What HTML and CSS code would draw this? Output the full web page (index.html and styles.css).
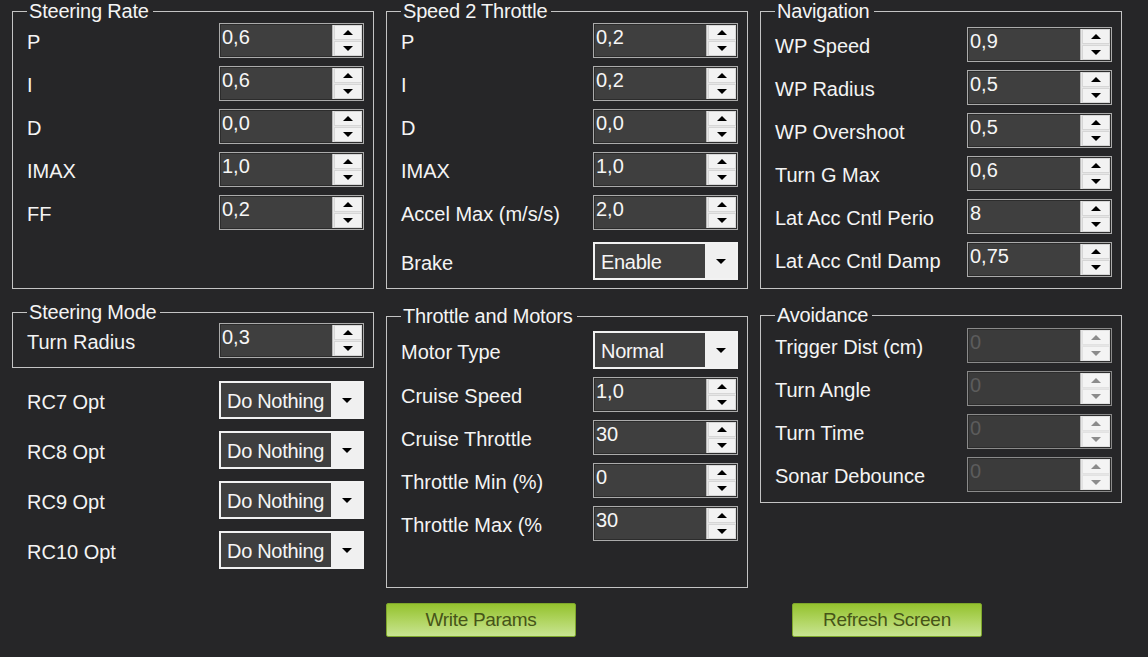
FILE: index.html
```html
<!DOCTYPE html>
<html>
<head>
<meta charset="utf-8">
<link rel="stylesheet" href="styles.css">
</head>
<body>
<div class="page">
  <div class="col">
    <fieldset class="grp top first">
      <legend>Steering Rate</legend>
      <div class="rows">
        <div class="row"><span class="lbl">P</span><div class="spin"><span class="val">0,6</span><span class="btns"><span class="b"><i class="up"></i></span><span class="b"><i class="dn"></i></span></span></div></div>
        <div class="row"><span class="lbl">I</span><div class="spin"><span class="val">0,6</span><span class="btns"><span class="b"><i class="up"></i></span><span class="b"><i class="dn"></i></span></span></div></div>
        <div class="row"><span class="lbl">D</span><div class="spin"><span class="val">0,0</span><span class="btns"><span class="b"><i class="up"></i></span><span class="b"><i class="dn"></i></span></span></div></div>
        <div class="row"><span class="lbl">IMAX</span><div class="spin"><span class="val">1,0</span><span class="btns"><span class="b"><i class="up"></i></span><span class="b"><i class="dn"></i></span></span></div></div>
        <div class="row"><span class="lbl">FF</span><div class="spin"><span class="val">0,2</span><span class="btns"><span class="b"><i class="up"></i></span><span class="b"><i class="dn"></i></span></span></div></div>
      </div>
    </fieldset>
    <fieldset class="grp mode">
      <legend>Steering Mode</legend>
      <div class="rows">
        <div class="row"><span class="lbl">Turn Radius</span><div class="spin"><span class="val">0,3</span><span class="btns"><span class="b"><i class="up"></i></span><span class="b"><i class="dn"></i></span></span></div></div>
      </div>
    </fieldset>
    <div class="rc">
      <div class="row rcrow"><span class="lbl">RC7 Opt</span><div class="combo"><span class="txt">Do Nothing</span><span class="drop"><i class="dn"></i></span></div></div>
      <div class="row rcrow"><span class="lbl">RC8 Opt</span><div class="combo"><span class="txt">Do Nothing</span><span class="drop"><i class="dn"></i></span></div></div>
      <div class="row rcrow"><span class="lbl">RC9 Opt</span><div class="combo"><span class="txt">Do Nothing</span><span class="drop"><i class="dn"></i></span></div></div>
      <div class="row rcrow"><span class="lbl">RC10 Opt</span><div class="combo"><span class="txt">Do Nothing</span><span class="drop"><i class="dn"></i></span></div></div>
    </div>
  </div>

  <div class="col">
    <fieldset class="grp top first">
      <legend>Speed 2 Throttle</legend>
      <div class="rows">
        <div class="row"><span class="lbl">P</span><div class="spin"><span class="val">0,2</span><span class="btns"><span class="b"><i class="up"></i></span><span class="b"><i class="dn"></i></span></span></div></div>
        <div class="row"><span class="lbl">I</span><div class="spin"><span class="val">0,2</span><span class="btns"><span class="b"><i class="up"></i></span><span class="b"><i class="dn"></i></span></span></div></div>
        <div class="row"><span class="lbl">D</span><div class="spin"><span class="val">0,0</span><span class="btns"><span class="b"><i class="up"></i></span><span class="b"><i class="dn"></i></span></span></div></div>
        <div class="row"><span class="lbl">IMAX</span><div class="spin"><span class="val">1,0</span><span class="btns"><span class="b"><i class="up"></i></span><span class="b"><i class="dn"></i></span></span></div></div>
        <div class="row"><span class="lbl">Accel Max (m/s/s)</span><div class="spin"><span class="val">2,0</span><span class="btns"><span class="b"><i class="up"></i></span><span class="b"><i class="dn"></i></span></span></div></div>
        <div class="row combrow"><span class="lbl">Brake</span><div class="combo"><span class="txt">Enable</span><span class="drop"><i class="dn"></i></span></div></div>
      </div>
    </fieldset>
    <fieldset class="grp motors">
      <legend>Throttle and Motors</legend>
      <div class="rows">
        <div class="row combrow"><span class="lbl">Motor Type</span><div class="combo"><span class="txt">Normal</span><span class="drop"><i class="dn"></i></span></div></div>
        <div class="row"><span class="lbl">Cruise Speed</span><div class="spin"><span class="val">1,0</span><span class="btns"><span class="b"><i class="up"></i></span><span class="b"><i class="dn"></i></span></span></div></div>
        <div class="row"><span class="lbl">Cruise Throttle</span><div class="spin"><span class="val">30</span><span class="btns"><span class="b"><i class="up"></i></span><span class="b"><i class="dn"></i></span></span></div></div>
        <div class="row"><span class="lbl">Throttle Min (%)</span><div class="spin"><span class="val">0</span><span class="btns"><span class="b"><i class="up"></i></span><span class="b"><i class="dn"></i></span></span></div></div>
        <div class="row"><span class="lbl">Throttle Max (%</span><div class="spin"><span class="val">30</span><span class="btns"><span class="b"><i class="up"></i></span><span class="b"><i class="dn"></i></span></span></div></div>
      </div>
    </fieldset>
  </div>

  <div class="col">
    <fieldset class="grp top nav">
      <legend>Navigation</legend>
      <div class="rows">
        <div class="row"><span class="lbl">WP Speed</span><div class="spin"><span class="val">0,9</span><span class="btns"><span class="b"><i class="up"></i></span><span class="b"><i class="dn"></i></span></span></div></div>
        <div class="row"><span class="lbl">WP Radius</span><div class="spin"><span class="val">0,5</span><span class="btns"><span class="b"><i class="up"></i></span><span class="b"><i class="dn"></i></span></span></div></div>
        <div class="row"><span class="lbl">WP Overshoot</span><div class="spin"><span class="val">0,5</span><span class="btns"><span class="b"><i class="up"></i></span><span class="b"><i class="dn"></i></span></span></div></div>
        <div class="row"><span class="lbl">Turn G Max</span><div class="spin"><span class="val">0,6</span><span class="btns"><span class="b"><i class="up"></i></span><span class="b"><i class="dn"></i></span></span></div></div>
        <div class="row"><span class="lbl">Lat Acc Cntl Perio</span><div class="spin"><span class="val">8</span><span class="btns"><span class="b"><i class="up"></i></span><span class="b"><i class="dn"></i></span></span></div></div>
        <div class="row"><span class="lbl">Lat Acc Cntl Damp</span><div class="spin"><span class="val">0,75</span><span class="btns"><span class="b"><i class="up"></i></span><span class="b"><i class="dn"></i></span></span></div></div>
      </div>
    </fieldset>
    <fieldset class="grp avoid">
      <legend>Avoidance</legend>
      <div class="rows">
        <div class="row"><span class="lbl">Trigger Dist (cm)</span><div class="spin dis"><span class="val">0</span><span class="btns"><span class="b"><i class="up"></i></span><span class="b"><i class="dn"></i></span></span></div></div>
        <div class="row"><span class="lbl">Turn Angle</span><div class="spin dis"><span class="val">0</span><span class="btns"><span class="b"><i class="up"></i></span><span class="b"><i class="dn"></i></span></span></div></div>
        <div class="row"><span class="lbl">Turn Time</span><div class="spin dis"><span class="val">0</span><span class="btns"><span class="b"><i class="up"></i></span><span class="b"><i class="dn"></i></span></span></div></div>
        <div class="row"><span class="lbl">Sonar Debounce</span><div class="spin dis"><span class="val">0</span><span class="btns"><span class="b"><i class="up"></i></span><span class="b"><i class="dn"></i></span></span></div></div>
      </div>
    </fieldset>
  </div>

  <div class="foot foot2"><button class="gbtn">Write Params</button></div>
  <div class="foot foot3"><button class="gbtn">Refresh Screen</button></div>
</div>
</body>
</html>
```

FILE: styles.css
```css
html, body {
  margin: 0;
  padding: 0;
  background: #262628;
}
body {
  width: 1148px;
  height: 657px;
  overflow: hidden;
  font-family: "Liberation Sans", Arial, sans-serif;
  font-size: 20px;
  color: #f4f4f4;
}
.page {
  display: grid;
  grid-template-columns: 362px 362px 362px;
  column-gap: 12px;
  padding-left: 12px;
  align-items: start;
}
.col {
  display: flex;
  flex-direction: column;
}
.grp {
  margin: 0;
  padding: 0 9px 0 14px;
  border: 1px solid #c4c4c4;
  min-width: 0;
  box-sizing: border-box;
}
.grp legend {
  padding: 0 4px 0 2px;
  font-size: 20px;
  line-height: 22px;
  height: 22px;
  color: #f4f4f4;
  letter-spacing: -0.2px;
}
.top { height: 289px; }
.first { padding-top: 1px; }
.nav { padding-top: 5px; }
.mode { margin-top: 12px; padding-bottom: 9px; }
.motors { margin-top: 16px; padding-top: 4px; padding-bottom: 46px; }
.avoid { margin-top: 15px; padding-top: 2px; padding-bottom: 10px; }

.rows {
  display: flex;
  flex-direction: column;
  gap: 8px;
}
.row {
  display: flex;
  align-items: center;
  justify-content: space-between;
  height: 35px;
}
.lbl {
  padding-top: 4px;
  white-space: nowrap;
}
.combrow { height: 38px; }
.top .combrow { margin-top: 4px; }

.spin {
  width: 145px;
  height: 35px;
  box-sizing: border-box;
  border: 1px solid #ababab;
  outline: 1px solid #2c2c2c;
  outline-offset: -2px;
  background: #3f3f3f;
  display: flex;
}
.val {
  flex: 1;
  padding: 1px 0 0 2px;
  line-height: 24px;
  color: #f6f6f6;
}
.btns {
  width: 31px;
  background: #e6e6e6;
  border-left: 1px solid #b8b8b8;
  display: flex;
  flex-direction: column;
  padding: 1px;
  gap: 1px;
  box-sizing: border-box;
}
.b {
  flex: 1;
  background: #f2f2f2;
  border: 1px solid #d6d6d6;
  display: flex;
  align-items: center;
  justify-content: center;
}
.up {
  width: 0;
  height: 0;
  border-left: 5px solid transparent;
  border-right: 5px solid transparent;
  border-bottom: 5px solid #000;
}
.dn {
  width: 0;
  height: 0;
  border-left: 5px solid transparent;
  border-right: 5px solid transparent;
  border-top: 5px solid #000;
}
.dis { border-color: #8a8a8a; background: #3b3b3b; }
.dis .val { color: #5c5c5c; }
.dis .up { border-bottom-color: #8c8c8c; }
.dis .dn { border-top-color: #8c8c8c; }
.dis .b { background: #f4f4f4; border-color: #e2e2e2; }

.combo {
  width: 145px;
  height: 38px;
  box-sizing: border-box;
  border: 2px solid #f2f2f2;
  background: #3f3f3f;
  display: flex;
}
.combo .txt {
  flex: 1;
  padding-left: 6px;
  line-height: 36px;
  color: #f6f6f6;
  letter-spacing: -0.3px;
  white-space: nowrap;
  overflow: hidden;
}
.drop {
  width: 31px;
  background: #f0f0f0;
  display: flex;
  align-items: center;
  justify-content: center;
}

.rc {
  margin-top: 13px;
  padding: 0 10px 0 15px;
  display: flex;
  flex-direction: column;
  gap: 12px;
}
.rcrow { height: 38px; }

.foot { grid-row: 2; margin-top: 15px; }
.foot2 { grid-column: 2; }
.foot3 { grid-column: 3; padding-left: 32px; }
.gbtn {
  width: 190px;
  height: 34px;
  border: 1px solid #7ea62c;
  border-radius: 2px;
  background: linear-gradient(#94c22e, #b2d664 55%, #c8e492);
  color: #465418;
  font-family: "Liberation Sans", Arial, sans-serif;
  font-size: 19px;
  letter-spacing: -0.3px;
  padding: 0;
}
```
